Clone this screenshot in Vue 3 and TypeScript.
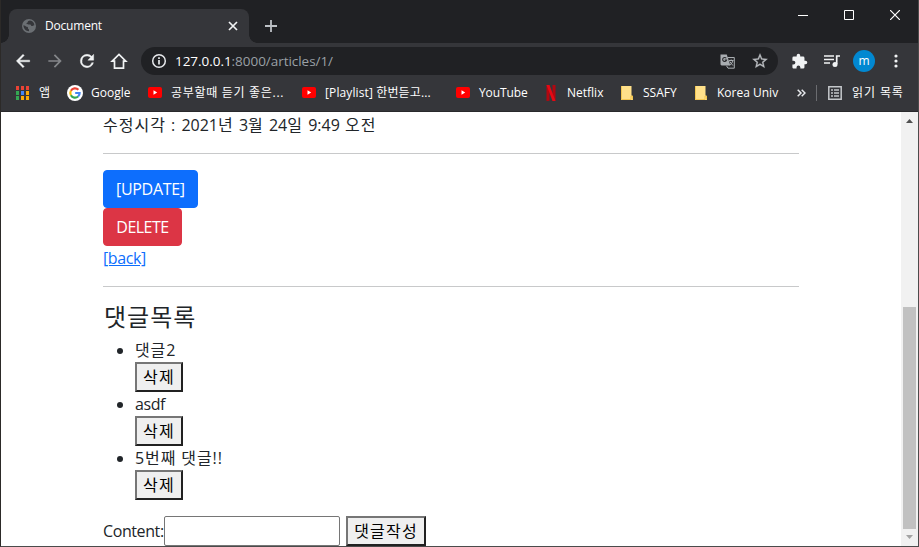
<script setup lang="ts">
import { ref } from 'vue'

interface Bookmark { icon: 'apps' | 'google' | 'youtube' | 'netflix' | 'folder'; label: string; cls: string }
interface Comment { id: number; text: string; cls: string }

const bookmarks: Bookmark[] = [
  { icon: 'apps', label: '앱', cls: 'b-apps' },
  { icon: 'google', label: 'Google', cls: 'b-google' },
  { icon: 'youtube', label: '공부할때 듣기 좋은...', cls: 'b-study' },
  { icon: 'youtube', label: '[Playlist] 한번듣고...', cls: 'b-playlist' },
  { icon: 'youtube', label: 'YouTube', cls: 'b-youtube' },
  { icon: 'netflix', label: 'Netflix', cls: 'b-netflix' },
  { icon: 'folder', label: 'SSAFY', cls: 'b-ssafy' },
  { icon: 'folder', label: 'Korea Univ', cls: 'b-korea' },
]
const comments = ref<Comment[]>([
  { id: 2, text: '댓글2', cls: 'c-ko' },
  { id: 3, text: 'asdf', cls: 'c-en' },
  { id: 5, text: '5번째 댓글!!', cls: 'c-ko' },
])
const content = ref('')
const appColors = ['#ea4335', '#ea4335', '#ea4335', '#34a853', '#4285f4', '#fbab05', '#34a853', '#fbab05', '#fbab05']
</script>

<template>
  <div class="window">
    <header class="titlebar">
      <div class="tab">
        <svg class="globe" width="14" height="14" viewBox="0 0 14 14"><circle cx="7" cy="7" r="7" fill="#6b6f73" /><path d="M1.4 6.2c1.2.1 2 .6 3 1.6.9 0 1.6.2 1.6 1v1c1 .3 1 1 1 2.400C3.800 12 1.500 9.600 1.400 6.200zM8 1.600c-1 .4-2.200.3-2.200 1.500 0 .8-1.300.6-1.300 1.500 0 1.100 2.300.7 3.700.8.900.1.800 1.700 1.900 1.700.8 0 1-.9 2.300-.8C12.300 3.800 10.500 1.900 8 1.600z" fill="#35363a" /></svg>
        <span class="tab-title">Document</span>
        <svg class="tab-close" width="10" height="10" viewBox="0 0 10 10"><path d="M1 1l8 8M9 1L1 9" stroke="#f1f3f4" stroke-width="1.7" /></svg>
      </div>
      <svg class="new-tab" width="12" height="12" viewBox="0 0 12 12"><path d="M6 0v12M0 6h12" stroke="#bdc1c6" stroke-width="1.8" /></svg>
      <div class="controls">
        <svg width="10" height="10" viewBox="0 0 10 10"><path d="M0 5.500h10" stroke="#fff" /></svg>
        <svg width="10" height="10" viewBox="0 0 10 10"><path d="M.5.5h9v9h-9z" fill="none" stroke="#fff" /></svg>
        <svg width="10" height="10" viewBox="0 0 10 10"><path d="M0 0l10 10M10 0L0 10" stroke="#fff" stroke-width="1.200" /></svg>
      </div>
    </header>

    <nav class="toolbar">
      <svg class="nav" width="20" height="20" viewBox="0 0 24 24"><path d="M20 11H7.830l5.590-5.590L12 4l-8 8 8 8 1.410-1.410L7.830 13H20z" fill="#f1f3f4" stroke="#f1f3f4" stroke-width=".5" /></svg>
      <svg class="nav" width="20" height="20" viewBox="0 0 24 24"><path d="M4 11h12.170l-5.590-5.590L12 4l8 8-8 8-1.410-1.410L16.170 13H4z" fill="#85878a" /></svg>
      <svg class="nav" width="20" height="20" viewBox="0 0 24 24"><path d="M17.650 6.350A7.950 7.950 0 0 0 12 4a8 8 0 1 0 7.730 10h-2.080A6 6 0 1 1 12 6c1.660 0 3.140.69 4.220 1.780L13 11h7V4z" fill="#f1f3f4" stroke="#f1f3f4" stroke-width=".5" /></svg>
      <svg class="nav" width="20" height="20" viewBox="0 0 20 20"><path d="M3.200 10.200L10 3.400l6.800 6.800h-2.300v6.900h-9v-6.900z" fill="none" stroke="#f1f3f4" stroke-width="1.700" /></svg>
      <div class="omnibox">
        <svg width="16" height="16" viewBox="0 0 16 16"><circle cx="8" cy="8" r="6.300" fill="none" stroke="#e8eaed" stroke-width="1.500" /><path d="M8 7v4.500M8 4.200v1.700" stroke="#e8eaed" stroke-width="1.700" /></svg>
        <span class="url"><b>127.0.0.1</b>:8000/articles/1/</span>
        <svg class="translate" width="15" height="15" viewBox="0 0 15 15"><path d="M7.500 3.500h6.800v10.700H8L6.500 11.800" fill="#292a2d" stroke="#a9adb1" /><path d="M.5.500h6.300l3.500 11H1.500l-1-1z" fill="#a9adb1" /><path d="M6.300 4.300A2 2 0 1 0 6.600 6H4.600" fill="none" stroke="#292a2d" stroke-width="1.100" /><path d="M9 6.500h4.500M11.200 5.500v1M12.800 6.500c-.3 2-1.500 3.500-3 4.500M9.700 7.500l3.200 4" fill="none" stroke="#a9adb1" /></svg>
        <svg class="star" width="18" height="18" viewBox="0 0 24 24"><path d="M22 9.240l-7.190-.62L12 2 9.190 8.630 2 9.240l5.460 4.730L5.820 21 12 17.270 18.180 21l-1.630-7.030zM12 15.400l-3.760 2.270 1-4.280-3.320-2.880 4.380-.38L12 6.100l1.710 4.040 4.380.38-3.320 2.880 1 4.280z" fill="#b9bcc0" stroke="#b9bcc0" stroke-width=".4" /></svg>
      </div>
      <svg class="puzzle" width="17" height="17" viewBox="0 0 24 24"><path d="M20.500 11H19V7a2 2 0 0 0-2-2h-4V3.500a2.500 2.500 0 0 0-5 0V5H4a2 2 0 0 0-2 2v3.800h1.500a2.700 2.700 0 0 1 0 5.400H2V20c0 1.100.9 2 2 2h3.800v-1.500a2.700 2.700 0 0 1 5.400 0V22H17a2 2 0 0 0 2-2v-4h1.500a2.500 2.500 0 0 0 0-5z" fill="#f1f3f4" /></svg>
      <svg class="queue" width="16" height="14" viewBox="0 0 16 14"><path d="M0 2h10M0 5.500h10M0 9h6" stroke="#f1f3f4" stroke-width="1.500" /><path d="M12.700 10V2H16" fill="none" stroke="#f1f3f4" stroke-width="1.700" /><circle cx="11" cy="10.500" r="2.500" fill="#f1f3f4" /></svg>
      <span class="avatar">m</span>
      <svg class="dots" width="4" height="14" viewBox="0 0 4 14"><g fill="#f1f3f4"><circle cx="2" cy="2" r="1.600" /><circle cx="2" cy="7" r="1.600" /><circle cx="2" cy="12" r="1.600" /></g></svg>
    </nav>

    <div class="bookmarks">
      <a v-for="b in bookmarks" :key="b.label" class="bookmark" :class="b.cls">
        <svg v-if="b.icon === 'apps'" width="13" height="14" viewBox="0 0 13 14"><rect v-for="(c, i) in appColors" :key="i" :x="(i % 3) * 5" :y="Math.floor(i / 3) * 5" width="3" height="4" :fill="c" /></svg>
        <svg v-else-if="b.icon === 'google'" width="16" height="16" viewBox="0 0 16 16"><circle cx="8" cy="8" r="8" fill="#fff" /><g fill="none" stroke-width="2.200"><path d="M3.900 5.800A4.700 4.700 0 0 1 11.400 4.800" stroke="#ea4335" /><path d="M3.900 5.700a4.700 4.700 0 0 0 0 4.600" stroke="#fbbc05" /><path d="M3.900 10.200a4.700 4.700 0 0 0 7.200 1.300" stroke="#34a853" /><path d="M11.100 11.500A4.500 4.500 0 0 0 12.600 8H8.200" stroke="#4285f4" /></g></svg>
        <svg v-else-if="b.icon === 'youtube'" width="14" height="11" viewBox="0 0 14 11"><rect width="14" height="11" rx="2" fill="#f00" /><path d="M5.500 3.300v4.400l3.700-2.200z" fill="#fff" /></svg>
        <svg v-else-if="b.icon === 'netflix'" width="10" height="16" viewBox="0 0 10 16"><path d="M.5 0h3v15.700l-3 .3zM6.500 0h3v16l-3-.3z" fill="#b20710" /><path d="M.5 0h3l6 16h-3z" fill="#e50914" /></svg>
        <svg v-else width="12" height="14" viewBox="0 0 12 14"><path d="M0 0h10.500v9.500L12 10v4H0z" fill="#ffe08a" /><path d="M.4 0v13.600H10V10h1.600v3.600" fill="none" stroke="#edbd3c" stroke-width=".8" /></svg>
        <span>{{ b.label }}</span>
      </a>
      <svg class="more" width="9" height="8" viewBox="0 0 9 8"><path d="M.7.700L4 4 .7 7.300M4.700.700L8 4 4.700 7.300" fill="none" stroke="#e8eaed" stroke-width="1.500" /></svg>
      <i class="divider" />
      <a class="reading">
        <svg width="14" height="14" viewBox="0 0 14 14"><path d="M.8.800h12.400v12.400H.8z" fill="none" stroke="#c4c7ca" stroke-width="1.500" /><path d="M3 4h2M6 4h5M3 7h2M6 7h5M3 10h2M6 10h5" stroke="#c4c7ca" stroke-width="1.600" /></svg>
        <span>읽기 목록</span>
      </a>
    </div>

    <div class="viewport">
      <main class="page">
        <p class="modified"><span class="ko">수정시각 : </span>2021<span class="ko">년 </span>3<span class="ko">월 </span>24<span class="ko">일 </span>9:49<span class="ko"> 오전</span></p>
        <hr>
        <div class="row"><a class="btn primary">[UPDATE]</a></div>
        <div class="row"><button class="btn danger">DELETE</button></div>
        <a class="back">[back]</a>
        <hr>
        <h4>댓글목록</h4>
        <ul>
          <li v-for="c in comments" :key="c.id">
            <span class="comment" :class="c.cls">{{ c.text }}</span>
            <button class="native remove">삭제</button>
          </li>
        </ul>
        <form class="write" @submit.prevent>
          <label for="content">Content:</label>
          <input id="content" v-model="content" type="text">
          <button class="native submit">댓글작성</button>
        </form>
      </main>
      <aside class="scrollbar">
        <svg width="7" height="4" viewBox="0 0 7 4"><path d="M0 4h7L3.500 0z" fill="#505050" /></svg>
        <div class="thumb" />
        <svg width="7" height="4" viewBox="0 0 7 4"><path d="M0 0h7L3.500 4z" fill="#a3a3a3" /></svg>
      </aside>
    </div>
  </div>
</template>

<style>
body { margin: 0; overflow: hidden; }
</style>
<style scoped>
* { box-sizing: border-box; }
svg { display: block; flex: none; }
span, p, a, h4, label { white-space: nowrap; }
.window { width: 919px; height: 547px; display: flex; flex-direction: column; border: solid #4b4b4b; border-width: 0 1px 1px; border-left-color: #2c2a28; background: #35363a; font-family: "Open Sans", "Noto Sans CJK KR", sans-serif; color: #212529; }
.titlebar { height: 43px; flex: none; display: flex; align-items: flex-start; background: #202124; padding-left: 8px; }
.tab { position: relative; width: 240px; height: 34px; margin-top: 9px; display: flex; align-items: center; border-radius: 8px 8px 0 0; background: #35363a; padding: 0 11px 0 13px; }
.tab::before, .tab::after { content: ""; position: absolute; bottom: 0; width: 8px; height: 8px; }
.tab::before { left: -8px; background: radial-gradient(circle at 0 0, transparent 7.5px, #35363a 8px); }
.tab::after { right: -8px; background: radial-gradient(circle at 100% 0, transparent 7.5px, #35363a 8px); }
.tab-title { margin: -1px 0 0 9px; flex: 1; font-size: 12px; letter-spacing: -.2px; color: #fff; }
.new-tab { margin: 20px 0 0 16px; }
.controls { margin: 10px 18px 0 auto; display: flex; gap: 36px; }
.toolbar { height: 36px; flex: none; display: flex; align-items: center; padding-left: 12px; }
.nav { margin-right: 12px; }
.omnibox { width: 637px; height: 28px; display: flex; align-items: center; border-radius: 14px; background: #202124; padding: 0 9px 0 10px; }
.url { margin-left: 8px; flex: 1; font-size: 13.500px; letter-spacing: -.04px; color: #9aa0a6; }
.url b { font-weight: 400; color: #fff; }
.translate { margin-right: 16px; }
.puzzle { margin-left: 13px; }
.queue { margin-left: 16px; }
.avatar { width: 22px; height: 22px; margin-left: 13px; border-radius: 50%; background: #0288d1; color: #fff; font-size: 12px; line-height: 21px; text-align: center; }
.dots { margin-left: 19px; }
.bookmarks { height: 33px; flex: none; display: grid; grid-template-columns: 51px 81px 154px 154px 90px 75px 74px 102px 19px 12px 90px; align-items: center; padding: 0 0 5px 15px; border-bottom: 1px solid #29292c; color: #fff; font-size: 12px; }
.bookmark, .reading { display: flex; align-items: center; gap: 9px; }
.bookmark span, .reading span { margin-top: 1px; line-height: 18px; }
.b-apps { gap: 10px; }
.b-google { gap: 8px; }
.b-study { letter-spacing: .7px; }
.b-playlist { letter-spacing: .12px; }
.b-youtube { letter-spacing: -.1px; }
.b-netflix { gap: 11px; }
.b-ssafy, .b-korea, .reading { gap: 10px; }
.reading { letter-spacing: .9px; }
.divider { width: 1px; height: 16px; background: #6b6c70; }
.viewport { flex: 1; min-height: 0; display: flex; background: #fff; }
.page { flex: 1; padding: 0 102px; font-size: 16px; line-height: 24px; overflow: hidden; }
.modified { height: 25px; margin: 0; line-height: 26px; }
.ko { letter-spacing: 1px; white-space: pre; }
hr { height: 1px; margin: 16px 0; border: 0; background: #c8c9ca; }
.row { height: 38px; display: flex; }
.btn { height: 38px; padding: 0 12px; border: 1px solid; border-radius: 4px; font: inherit; line-height: 36px; color: #fff; }
.primary { width: 95px; background: #0d6efd; border-color: #0d6efd; letter-spacing: -.3px; }
.danger { width: 79px; background: #dc3545; border-color: #dc3545; letter-spacing: -.5px; }
.back { display: block; width: max-content; height: 24px; line-height: 24px; color: #0d6efd; text-decoration: underline; letter-spacing: -.4px; }
h4 { height: 29px; margin: 0 0 6px; font-size: 24px; line-height: 27px; font-weight: 400; letter-spacing: 1px; text-indent: 1px; }
ul { margin: 0 0 16px; padding-left: 32px; }
li { height: 54px; }
.comment { display: block; height: 24px; }
.c-ko { letter-spacing: .9px; }
.c-en { letter-spacing: -.4px; }
.native { display: block; height: 30px; padding: 0 0 1px; border: 2px solid; border-color: #767676 #212121 #212121 #767676; background: #efefef; font: inherit; line-height: 24px; letter-spacing: 1.2px; color: #000; text-align: center; white-space: nowrap; }
.remove { width: 48px; }
.write { height: 30px; display: flex; align-items: center; }
.write input { width: 176px; height: 30px; margin: 0 6px 0 0; padding: 1px 2px; border: 1px solid #767676; border-radius: 2px; background: #fff; font: inherit; }
.write label { width: 61px; letter-spacing: -.4px; }
.submit { width: 80px; }
.scrollbar { width: 17px; flex: none; display: flex; flex-direction: column; align-items: center; background: #f1f1f1; padding: 7px 0; }
.thumb { width: 13px; height: 222px; margin: auto 0 6px; background: #c1c1c1; }
</style>
